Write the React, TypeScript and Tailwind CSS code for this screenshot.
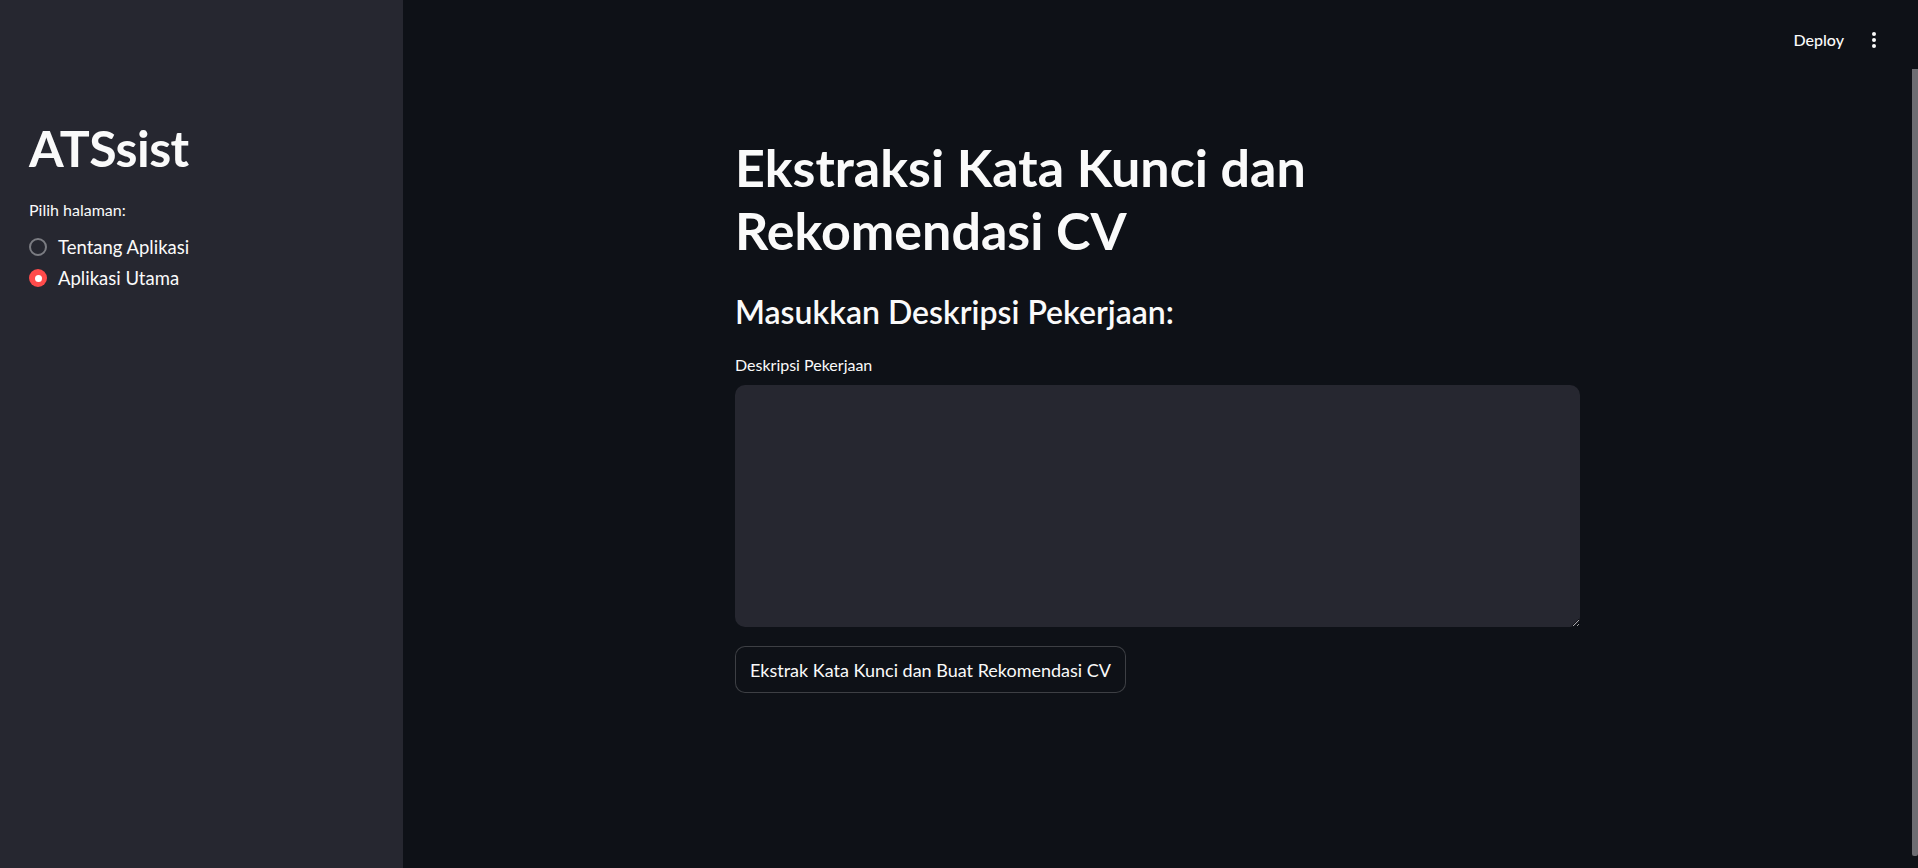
import { useState } from "react";

const font = "font-['Lato','Noto_Sans',sans-serif]";

export default function App() {
  const [page, setPage] = useState("utama");
  const pages = [
    { id: "tentang", label: "Tentang Aplikasi" },
    { id: "utama", label: "Aplikasi Utama" },
  ];

  return (
    <div className={`relative flex h-[868px] w-full overflow-hidden bg-[#0e1117] text-[#fafafa] ${font}`}>
      {/* Sidebar */}
      <aside className="w-[403px] shrink-0 bg-[#262730] px-[29px] pt-[117px]">
        <h1 className="text-[50px] font-bold leading-[62px] tracking-[-0.5px]">ATSsist</h1>
        <p className="mt-[20px] text-[16px] leading-[22px]">Pilih halaman:</p>
        <div className="mt-[15px] flex flex-col gap-[9px]">
          {pages.map((p) => (
            <label key={p.id} className="flex h-[22px] cursor-pointer items-center gap-[11px]" onClick={() => setPage(p.id)}>
              {page === p.id ? (
                <span className="flex h-[18px] w-[18px] items-center justify-center rounded-full bg-[#ff4b4b]">
                  <span className="h-[7px] w-[7px] rounded-full bg-white" />
                </span>
              ) : (
                <span className="h-[18px] w-[18px] rounded-full border-2 border-[#7b7c82]" />
              )}
              <span className="text-[18.5px] leading-[22px]">{p.label}</span>
            </label>
          ))}
        </div>
      </aside>

      {/* Main */}
      <main className="relative flex-1 pr-[6px]">
        <header className="flex h-[80px] items-start justify-end gap-[28px] pr-[36px] pt-[28px]">
          <button className="text-[16px] font-medium leading-[24px]">Deploy</button>
          <button className="flex h-[24px] flex-col items-center justify-center gap-[2px]">
            <span className="h-[4px] w-[4px] rounded-full bg-[#fafafa]" />
            <span className="h-[4px] w-[4px] rounded-full bg-[#fafafa]" />
            <span className="h-[4px] w-[4px] rounded-full bg-[#fafafa]" />
          </button>
        </header>

        <div className="mx-auto w-[845px] pt-[56px]">
          <h1 className="w-[600px] text-[52px] font-bold leading-[63px]">Ekstraksi Kata Kunci dan Rekomendasi CV</h1>
          <h3 className="mt-[30px] text-[32px] font-semibold leading-[40px]">Masukkan Deskripsi Pekerjaan:</h3>
          <label className="mt-[23px] block text-[16px] leading-[20px]">Deskripsi Pekerjaan</label>
          <textarea className="mt-[10px] block h-[242px] w-full resize-y rounded-[10px] bg-[#262730] px-[14px] py-[12px] text-[18px] outline-none" />
          <button className="mt-[19px] h-[47px] rounded-[10px] border border-[#fafafa]/20 bg-[#0e1117] px-[14px] text-[18px] leading-[24px]">
            Ekstrak Kata Kunci dan Buat Rekomendasi CV
          </button>
        </div>

        {/* overlay scrollbar */}
        <div className="absolute right-0 top-[69px] h-[787px] w-[6px] rounded-b-[2px] bg-[#6d6d72]" />
      </main>
    </div>
  );
}
